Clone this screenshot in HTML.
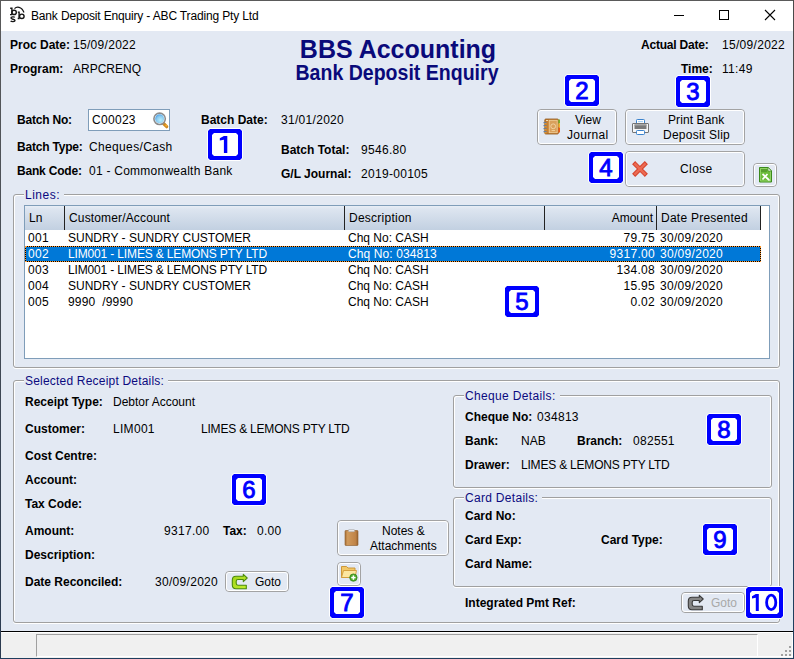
<!DOCTYPE html>
<html><head><meta charset="utf-8">
<style>
*{box-sizing:border-box}
html,body{margin:0;padding:0}
body{width:794px;height:659px;overflow:hidden;position:relative;background:#e3e9f3;font-family:"Liberation Sans",sans-serif;font-size:12px;line-height:14px;color:#000}
.a{position:absolute}
.t{position:absolute;white-space:pre;font-size:12px;line-height:14px}
.b{font-weight:bold}
.gl{position:absolute;border:1px solid #a0a0a0;border-radius:3px;box-shadow:inset 1px 1px 0 #fff,inset -1px 0 0 #fff,0 1px 0 #fff}
.gw{position:absolute;border:1px solid #fff;border-radius:3px}
.lab{position:absolute;white-space:pre;background:#e3e9f3;color:#0c0a80;padding:0 4px 0 1px;line-height:14px}
.btn{position:absolute;border:1px solid #a3a3a3;border-radius:4px;background:#e3e9f3}
.btn::after{content:"";position:absolute;left:0;top:0;right:0;bottom:0;border:1px solid #fff;border-radius:3px}
.nb{position:absolute;width:34px;height:31px}
.nb svg{position:absolute;left:0;top:0}
.nd{position:absolute;left:0;top:0;width:100%;height:100%;text-align:center;font:normal 24px/31px "Liberation Sans",sans-serif;color:#0000ff;-webkit-text-stroke:0.9px #0000ff}
</style></head><body>
<!-- window frame -->
<div class="a" style="left:0;top:0;width:794px;height:31px;background:#fff"></div>
<div class="a" style="left:0;top:631px;width:794px;height:1px;background:#000"></div>
<div class="a" style="left:0;top:632px;width:794px;height:27px;background:#f0f0f0"></div>
<div class="a" style="left:0;top:632px;width:794px;height:1px;background:#fff"></div>
<!-- status bar panels -->
<div class="a" style="left:36px;top:634px;width:722px;height:23px;border-left:1px solid #a0a0a0;border-top:1px solid #a0a0a0;border-right:1px solid #fff;border-bottom:1px solid #fff"></div>
<div class="a" style="left:758px;top:634px;width:35px;height:23px;border-right:1px solid #fff;border-bottom:1px solid #fff"></div>
<svg class="a" style="left:776px;top:640px" width="16" height="16"><g fill="#a0a0a0"><rect x="13" y="6" width="2" height="2"/><rect x="9" y="10" width="2" height="2"/><rect x="13" y="10" width="2" height="2"/><rect x="5" y="14" width="2" height="2"/><rect x="9" y="14" width="2" height="2"/><rect x="13" y="14" width="2" height="2"/></g></svg>
<!-- borders -->
<div class="a" style="left:0;top:0;width:1px;height:659px;background:linear-gradient(#5a5a5a,#2a3a50)"></div>
<div class="a" style="left:0;top:0;width:794px;height:1px;background:#5a5a5a"></div>
<div class="a" style="left:793px;top:0;width:1px;height:659px;background:linear-gradient(#4a4a4a 0,#4a4a4a 45%,#1f3e5e 55%,#1f3e5e 100%)"></div>
<div class="a" style="left:0;top:658px;width:794px;height:1px;background:#1f3e5e"></div>

<!-- title bar -->
<svg class="a" style="left:6px;top:4px" width="24" height="22" viewBox="0 0 24 22">
<g fill="none" stroke="#151515" stroke-width="1.4">
<path d="M4.2 4.2H5.9V10.6M4 10.6H6.2"/>
<ellipse cx="8.1" cy="8.4" rx="2.2" ry="2.1"/>
<path d="M13.1 7.6V14.6M11.8 8.1H13.1M11.7 14.5H13.6"/>
<ellipse cx="15.8" cy="12.3" rx="2.3" ry="2.2"/>
<path d="M8.8 13.4C8.2 12.6 5 12.6 5 14 C5 15.4 9 15 9 16.5 C9 18 5.5 17.8 4.6 17"/>
<path d="M8.5 4.6C10.5 2.5 15.5 2 18 8.5" stroke-width="1.2"/>
</g></svg>
<div class="t" style="left:31px;top:9px;letter-spacing:-0.16px">Bank Deposit Enquiry - ABC Trading Pty Ltd</div>
<div class="a" style="left:674px;top:15px;width:10px;height:1px;background:#000"></div>
<div class="a" style="left:719px;top:10px;width:10px;height:10px;border:1px solid #000"></div>
<svg class="a" style="left:764px;top:9px" width="12" height="12"><path d="M1 1L11 11M11 1L1 11" stroke="#000" stroke-width="1.1"/></svg>

<!-- header -->
<div class="t b" style="left:10px;top:38px">Proc Date:</div>
<div class="t" style="left:73px;top:38px;letter-spacing:0.3px">15/09/2022</div>
<div class="t b" style="left:10px;top:62px">Program:</div>
<div class="t" style="left:73px;top:62px">ARPCRENQ</div>
<div class="t b" style="left:1px;width:794px;text-align:center;top:34px;font-size:25px;line-height:30px;color:#0a0a7a">BBS Accounting</div>
<div class="t b" style="left:0;width:794px;text-align:center;top:61px;font-size:22px;line-height:24px;color:#0a0a7a;transform:scaleX(0.888);transform-origin:397px 0">Bank Deposit Enquiry</div>
<div class="t b" style="left:641px;top:38px;letter-spacing:-0.2px">Actual Date:</div>
<div class="t" style="left:722px;top:38px;letter-spacing:0.3px">15/09/2022</div>
<div class="t b" style="left:681px;top:62px">Time:</div>
<div class="t" style="left:722px;top:62px;letter-spacing:0.3px">11:49</div>

<!-- batch -->
<div class="t b" style="left:17px;top:113px;letter-spacing:-0.2px">Batch No:</div>
<div class="a" style="left:88px;top:109px;width:82px;height:22px;background:#fff;border:1px solid #7f9db9"></div>
<div class="t" style="left:92px;top:113px;letter-spacing:0.3px">C00023</div>
<svg class="a" style="left:148px;top:108px" width="24" height="24" viewBox="0 0 24 24">
<defs><radialGradient id="mg" cx="0.6" cy="0.65" r="0.7"><stop offset="0" stop-color="#b8eefa"/><stop offset="0.6" stop-color="#8ccbf0"/><stop offset="1" stop-color="#4a9fe4"/></radialGradient></defs>
<path d="M15.5 15.5l3.2 3.2" stroke="#d08a20" stroke-width="3.2" stroke-linecap="round"/>
<circle cx="18.2" cy="17.6" r="1" fill="#f6b030"/>
<circle cx="11.6" cy="10.8" r="5.7" fill="#fff" stroke="#8c8c8c" stroke-width="1.6"/>
<circle cx="11.6" cy="10.8" r="4.5" fill="url(#mg)"/>
</svg>
<div class="t b" style="left:201px;top:113px">Batch Date:</div>
<div class="t" style="left:281px;top:113px;letter-spacing:0.3px">31/01/2020</div>
<div class="t b" style="left:17px;top:140px;letter-spacing:-0.2px">Batch Type:</div>
<div class="t" style="left:89px;top:140px;letter-spacing:0.35px">Cheques/Cash</div>
<div class="t b" style="left:17px;top:164px;letter-spacing:-0.2px">Bank Code:</div>
<div class="t" style="left:89px;top:164px;letter-spacing:0.25px">01 - Commonwealth Bank</div>
<div class="t b" style="left:281px;top:143px">Batch Total:</div>
<div class="t" style="left:361px;top:143px;letter-spacing:0.3px">9546.80</div>
<div class="t b" style="left:281px;top:167px">G/L Journal:</div>
<div class="t" style="left:361px;top:167px;letter-spacing:0.3px">2019-00105</div>

<!-- buttons -->
<div class="btn" style="left:537px;top:109px;width:80px;height:36px"></div>
<svg class="a" style="left:543px;top:118px" width="18" height="17" viewBox="0 0 18 17">
<rect x="1.8" y="1" width="13.6" height="15" rx="1" fill="#c57f33" stroke="#8e5418" stroke-width="0.8"/>
<rect x="6.2" y="2.3" width="8" height="12.4" fill="#d9a05c" stroke="#f3d29e" stroke-width="0.8"/>
<circle cx="10.2" cy="8.3" r="2.4" fill="none" stroke="#f6dcae" stroke-width="0.8"/>
<rect x="8.6" y="12" width="3.4" height="0.9" fill="#f3d29e"/>
<rect x="3" y="2" width="2" height="1" fill="#f6dcae"/>
<g><rect x="0.5" y="4" width="3" height="1.3" fill="#6a7e98"/><rect x="1.5" y="5.3" width="2" height="1" fill="#f0a030"/>
<rect x="0.5" y="7" width="3" height="1.3" fill="#6a7e98"/><rect x="1.5" y="8.3" width="2" height="1" fill="#f0a030"/>
<rect x="0.5" y="10" width="3" height="1.3" fill="#6a7e98"/><rect x="1.5" y="11.3" width="2" height="1" fill="#f0a030"/>
<rect x="0.5" y="13" width="3" height="1.3" fill="#6a7e98"/><rect x="1.5" y="14.3" width="2" height="1" fill="#f0a030"/></g>
<rect x="15.4" y="1.5" width="1.6" height="4" fill="#78b028"/><rect x="15.4" y="5.5" width="1.6" height="4" fill="#f4b428"/><rect x="15.4" y="9.5" width="1.6" height="5" fill="#ec5a10"/>
</svg>
<div class="t" style="left:575px;top:113px">View</div>
<div class="t" style="left:567px;top:128px;letter-spacing:0.3px">Journal</div>

<div class="btn" style="left:625px;top:109px;width:120px;height:36px"></div>
<svg class="a" style="left:632px;top:118px" width="17" height="17" viewBox="0 0 17 17">
<rect x="4.5" y="1.5" width="8" height="6" rx="0.8" fill="#fff" stroke="#3b82cc" stroke-width="1"/>
<rect x="6" y="3" width="5" height="1.2" fill="#a8d0f4"/>
<rect x="0.5" y="5.5" width="16" height="9" rx="0.5" fill="#f6f6f6" stroke="#757575" stroke-width="1"/>
<rect x="2.5" y="6.5" width="12" height="4.5" fill="#7a7a7a"/>
<rect x="2.5" y="6.5" width="12" height="1.2" fill="#9a9a9a"/>
<rect x="4.5" y="12.5" width="8" height="4" rx="0.8" fill="#fff" stroke="#3b82cc" stroke-width="1"/>
</svg>
<div class="t" style="left:668px;top:113px;letter-spacing:0.1px">Print Bank</div>
<div class="t" style="left:663px;top:128px;letter-spacing:0.25px">Deposit Slip</div>

<div class="btn" style="left:625px;top:151px;width:120px;height:36px"></div>
<svg class="a" style="left:632px;top:160.5px" width="16" height="16" viewBox="0 0 16 16">
<path d="M3.2 3.2L12.8 12.8M12.8 3.2L3.2 12.8" stroke="#d5432c" stroke-width="4.4" stroke-linecap="square"/>
<path d="M3.2 3.2L12.8 12.8M12.8 3.2L3.2 12.8" stroke="#ec6a52" stroke-width="2.4" stroke-linecap="square"/>
</svg>
<div class="t" style="left:680px;top:162px;letter-spacing:0.4px">Close</div>

<div class="btn" style="left:753px;top:163px;width:24px;height:24px"></div>
<svg class="a" style="left:758px;top:166px" width="15" height="17" viewBox="0 0 15 17">
<path d="M1.5 1.5H10.2L13.5 4.8V16H1.5Z" fill="#6cbc3c" stroke="#3c8a1c" stroke-width="1"/>
<path d="M2.5 2.5H9.8L12.5 5.2V15H2.5Z" fill="none" stroke="#9ad870" stroke-width="0.8"/>
<rect x="3" y="3" width="6" height="3" fill="#58a030"/>
<path d="M10 1.5V5H13.5Z" fill="#fff" stroke="#3c8a1c" stroke-width="0.7"/>
<path d="M4.5 8L10.5 13.5M9.5 8L4.5 13.5M10.5 13.5l1 1" stroke="#fff" stroke-width="1.7"/>
</svg>

<!-- Lines group -->
<div class="gl" style="left:13px;top:194px;width:767px;height:174px"></div>
<div class="lab" style="left:24px;top:188px;letter-spacing:0.5px">Lines:</div>

<div class="a" style="left:24px;top:205px;width:746px;height:154px;background:#fff;border:1px solid #7f9db9"></div>
<div class="a" style="left:25px;top:206px;width:735px;height:24px;background:linear-gradient(#e8eef6 0,#dde5f0 12%,#c2d0e1 100%)"></div>
<div class="a" style="left:64px;top:206px;width:1px;height:24px;background:#222"></div>
<div class="a" style="left:344px;top:206px;width:1px;height:24px;background:#222"></div>
<div class="a" style="left:544px;top:206px;width:1px;height:24px;background:#222"></div>
<div class="a" style="left:656px;top:206px;width:1px;height:24px;background:#222"></div>
<div class="a" style="left:760px;top:206px;width:1px;height:24px;background:#222"></div>
<div class="t" style="left:29px;top:211px">Ln</div>
<div class="t" style="left:69px;top:211px;letter-spacing:0.15px">Customer/Account</div>
<div class="t" style="left:349px;top:211px;letter-spacing:0.25px">Description</div>
<div class="t" style="left:545px;top:211px;width:108px;text-align:right">Amount</div>
<div class="t" style="left:661px;top:211px;letter-spacing:0.25px">Date Presented</div>

<div class="a" style="left:25px;top:246px;width:736px;height:16px;background:#000"><div class="a" style="left:0;top:0;width:736px;height:16px;border:1px dotted #ff9a30"></div><div class="a" style="left:1px;top:1px;width:734px;height:14px;background:#0078d7"></div></div>

<div class="t" style="left:28px;top:231px;letter-spacing:0.3px">001</div>
<div class="t" style="left:68px;top:231px">SUNDRY - SUNDRY CUSTOMER</div>
<div class="t" style="left:348px;top:231px">Chq No: CASH</div>
<div class="t" style="left:545px;top:231px;width:110px;text-align:right;letter-spacing:0.3px">79.75</div>
<div class="t" style="left:660px;top:231px;letter-spacing:0.3px">30/09/2020</div>

<div class="t" style="left:28px;top:247px;color:#fff;letter-spacing:0.3px">002</div>
<div class="t" style="left:68px;top:247px;color:#fff;letter-spacing:-0.15px">LIM001 - LIMES &amp; LEMONS PTY LTD</div>
<div class="t" style="left:348px;top:247px;color:#fff;letter-spacing:0.1px">Chq No: 034813</div>
<div class="t" style="left:545px;top:247px;width:110px;text-align:right;color:#fff;letter-spacing:0.3px">9317.00</div>
<div class="t" style="left:660px;top:247px;color:#fff;letter-spacing:0.3px">30/09/2020</div>

<div class="t" style="left:28px;top:263px;letter-spacing:0.3px">003</div>
<div class="t" style="left:68px;top:263px;letter-spacing:-0.15px">LIM001 - LIMES &amp; LEMONS PTY LTD</div>
<div class="t" style="left:348px;top:263px">Chq No: CASH</div>
<div class="t" style="left:545px;top:263px;width:110px;text-align:right;letter-spacing:0.3px">134.08</div>
<div class="t" style="left:660px;top:263px;letter-spacing:0.3px">30/09/2020</div>

<div class="t" style="left:28px;top:279px;letter-spacing:0.3px">004</div>
<div class="t" style="left:68px;top:279px">SUNDRY - SUNDRY CUSTOMER</div>
<div class="t" style="left:348px;top:279px">Chq No: CASH</div>
<div class="t" style="left:545px;top:279px;width:110px;text-align:right;letter-spacing:0.3px">15.95</div>
<div class="t" style="left:660px;top:279px;letter-spacing:0.3px">30/09/2020</div>

<div class="t" style="left:28px;top:295px;letter-spacing:0.3px">005</div>
<div class="t" style="left:68px;top:295px;letter-spacing:0.15px">9990  /9990</div>
<div class="t" style="left:348px;top:295px">Chq No: CASH</div>
<div class="t" style="left:545px;top:295px;width:110px;text-align:right;letter-spacing:0.3px">0.02</div>
<div class="t" style="left:660px;top:295px;letter-spacing:0.3px">30/09/2020</div>

<!-- Selected receipt group -->
<div class="gl" style="left:13px;top:380px;width:767px;height:243px"></div>
<div class="lab" style="left:24px;top:374px;letter-spacing:0.2px">Selected Receipt Details:</div>

<div class="t b" style="left:25px;top:395px">Receipt Type:</div>
<div class="t" style="left:113px;top:395px">Debtor Account</div>
<div class="t b" style="left:25px;top:422px">Customer:</div>
<div class="t" style="left:113px;top:422px;letter-spacing:0.3px">LIM001</div>
<div class="t" style="left:201px;top:422px;letter-spacing:-0.2px">LIMES &amp; LEMONS PTY LTD</div>
<div class="t b" style="left:25px;top:449px">Cost Centre:</div>
<div class="t b" style="left:25px;top:473px">Account:</div>
<div class="t b" style="left:25px;top:497px">Tax Code:</div>
<div class="t b" style="left:25px;top:524px">Amount:</div>
<div class="t" style="left:164px;top:524px;letter-spacing:0.3px">9317.00</div>
<div class="t b" style="left:223px;top:524px">Tax:</div>
<div class="t" style="left:257px;top:524px;letter-spacing:0.3px">0.00</div>
<div class="t b" style="left:25px;top:548px">Description:</div>
<div class="t b" style="left:25px;top:575px">Date Reconciled:</div>
<div class="t" style="left:155px;top:575px;letter-spacing:0.3px">30/09/2020</div>

<div class="btn" style="left:225px;top:571px;width:64px;height:21px"></div>
<svg class="a" style="left:228px;top:571px" width="24" height="21" viewBox="0 0 24 21">
<defs><linearGradient id="gg" x1="0" y1="0" x2="1" y2="1"><stop offset="0" stop-color="#9ed21a"/><stop offset="1" stop-color="#c4f030"/></linearGradient></defs>
<path d="M15.3 5.3V3.4L19.2 7L15.3 10.6V8.5H10Q8.2 8.5 8.2 10.3V12.3Q8.2 14.2 10 14.2H18.3V17.7H8Q4.3 17.7 4.3 14V9Q4.3 5.3 8 5.3Z" fill="url(#gg)" stroke="#4a8a0a" stroke-width="1.1" stroke-linejoin="round"/>
</svg>
<div class="t" style="left:255px;top:575px">Goto</div>

<div class="btn" style="left:337px;top:520px;width:112px;height:36px"></div>
<svg class="a" style="left:344px;top:529px" width="15" height="17" viewBox="0 0 15 17">
<defs><linearGradient id="cb" x1="0" y1="0" x2="1" y2="0"><stop offset="0" stop-color="#a87038"/><stop offset="0.2" stop-color="#d09a5c"/><stop offset="0.8" stop-color="#c08448"/><stop offset="1" stop-color="#9a6430"/></linearGradient></defs>
<rect x="1" y="1.5" width="13" height="15" rx="0.8" fill="url(#cb)" stroke="#8c5a28" stroke-width="0.6"/>
<rect x="4.5" y="0.5" width="6" height="2.2" rx="0.5" fill="#e8e8e8" stroke="#a0a0a0" stroke-width="0.5"/>
</svg>
<div class="t" style="left:382px;top:524px">Notes &amp;</div>
<div class="t" style="left:370px;top:539px">Attachments</div>

<div class="btn" style="left:337px;top:562px;width:24px;height:24px"></div>
<svg class="a" style="left:340px;top:564px" width="18" height="18" viewBox="0 0 18 18">
<path d="M1.5 2.5H6.5L8 4H15V13.5H1.5Z" fill="#f2c868" stroke="#c8902c" stroke-width="0.9"/>
<path d="M3.5 6.5H16.5L15 13.5H1.5Z" fill="#fce6a0" stroke="#d09a38" stroke-width="0.9"/>
<circle cx="13.4" cy="13.6" r="3.7" fill="#4caa28" stroke="#2e7c12" stroke-width="0.7"/>
<rect x="12.65" y="11.4" width="1.5" height="4.4" fill="#fff"/><rect x="11.2" y="12.85" width="4.4" height="1.5" fill="#fff"/>
</svg>

<!-- Cheque group -->
<div class="gl" style="left:453px;top:395px;width:319px;height:93px"></div>
<div class="lab" style="left:464px;top:389px;letter-spacing:0.35px">Cheque Details:</div>
<div class="t b" style="left:465px;top:410px">Cheque No:</div>
<div class="t" style="left:537px;top:410px;letter-spacing:0.3px">034813</div>
<div class="t b" style="left:465px;top:434px">Bank:</div>
<div class="t" style="left:521px;top:434px">NAB</div>
<div class="t b" style="left:577px;top:434px">Branch:</div>
<div class="t" style="left:633px;top:434px;letter-spacing:0.3px">082551</div>
<div class="t b" style="left:465px;top:458px">Drawer:</div>
<div class="t" style="left:521px;top:458px;letter-spacing:-0.2px">LIMES &amp; LEMONS PTY LTD</div>

<!-- Card group -->
<div class="gl" style="left:453px;top:497px;width:319px;height:90px"></div>
<div class="lab" style="left:464px;top:491px;letter-spacing:0.3px">Card Details:</div>
<div class="t b" style="left:465px;top:509px">Card No:</div>
<div class="t b" style="left:465px;top:533px">Card Exp:</div>
<div class="t b" style="left:601px;top:533px">Card Type:</div>
<div class="t b" style="left:465px;top:557px">Card Name:</div>
<div class="t b" style="left:465px;top:596px">Integrated Pmt Ref:</div>

<div class="btn" style="left:681px;top:592px;width:64px;height:21px"></div>
<svg class="a" style="left:684px;top:592px" width="24" height="21" viewBox="0 0 24 21">
<path d="M15.3 5.3V3.4L19.2 7L15.3 10.6V8.5H10Q8.2 8.5 8.2 10.3V12.3Q8.2 14.2 10 14.2H18.3V17.7H8Q4.3 17.7 4.3 14V9Q4.3 5.3 8 5.3Z" fill="#858585" stroke="#383838" stroke-width="1.1" stroke-linejoin="round"/>
</svg>
<div class="t" style="left:711px;top:596px;color:#a8a8a8">Goto</div>

<!-- numbered markers -->
<div class="nb" style="left:208px;top:129px"><svg width="36" height="33" style="left:-1px;top:-1px"><path d="M3 0H33L36 3V30L33 33H3L0 30V3Z" fill="#fff"/><path d="M3 1H33L35 3V30L33 32H3L1 30V3Z" fill="#0000ff"/><path d="M7 5H29L31 7V26L29 28H7L5 26V7Z" fill="#fff"/><path d="M11.8 9.2L15.9 7H19.3V24H15.9V10.8L11.8 11.6Z" fill="#0000ff" transform="translate(1,1)"/></svg></div>
<div class="nb" style="left:565px;top:75px"><svg width="36" height="33" style="left:-1px;top:-1px"><path d="M3 0H33L36 3V30L33 33H3L0 30V3Z" fill="#fff"/><path d="M3 1H33L35 3V30L33 32H3L1 30V3Z" fill="#0000ff"/><path d="M7 5H29L31 7V26L29 28H7L5 26V7Z" fill="#fff"/></svg><div class="nd">2</div></div>
<div class="nb" style="left:676px;top:76px"><svg width="36" height="33" style="left:-1px;top:-1px"><path d="M3 0H33L36 3V30L33 33H3L0 30V3Z" fill="#fff"/><path d="M3 1H33L35 3V30L33 32H3L1 30V3Z" fill="#0000ff"/><path d="M7 5H29L31 7V26L29 28H7L5 26V7Z" fill="#fff"/></svg><div class="nd">3</div></div>
<div class="nb" style="left:589px;top:152px"><svg width="36" height="33" style="left:-1px;top:-1px"><path d="M3 0H33L36 3V30L33 33H3L0 30V3Z" fill="#fff"/><path d="M3 1H33L35 3V30L33 32H3L1 30V3Z" fill="#0000ff"/><path d="M7 5H29L31 7V26L29 28H7L5 26V7Z" fill="#fff"/></svg><div class="nd">4</div></div>
<div class="nb" style="left:505px;top:286px"><svg width="36" height="33" style="left:-1px;top:-1px"><path d="M3 0H33L36 3V30L33 33H3L0 30V3Z" fill="#fff"/><path d="M3 1H33L35 3V30L33 32H3L1 30V3Z" fill="#0000ff"/><path d="M7 5H29L31 7V26L29 28H7L5 26V7Z" fill="#fff"/></svg><div class="nd">5</div></div>
<div class="nb" style="left:232px;top:474px"><svg width="36" height="33" style="left:-1px;top:-1px"><path d="M3 0H33L36 3V30L33 33H3L0 30V3Z" fill="#fff"/><path d="M3 1H33L35 3V30L33 32H3L1 30V3Z" fill="#0000ff"/><path d="M7 5H29L31 7V26L29 28H7L5 26V7Z" fill="#fff"/></svg><div class="nd">6</div></div>
<div class="nb" style="left:330px;top:587px"><svg width="36" height="33" style="left:-1px;top:-1px"><path d="M3 0H33L36 3V30L33 33H3L0 30V3Z" fill="#fff"/><path d="M3 1H33L35 3V30L33 32H3L1 30V3Z" fill="#0000ff"/><path d="M7 5H29L31 7V26L29 28H7L5 26V7Z" fill="#fff"/></svg><div class="nd">7</div></div>
<div class="nb" style="left:707px;top:414px"><svg width="36" height="33" style="left:-1px;top:-1px"><path d="M3 0H33L36 3V30L33 33H3L0 30V3Z" fill="#fff"/><path d="M3 1H33L35 3V30L33 32H3L1 30V3Z" fill="#0000ff"/><path d="M7 5H29L31 7V26L29 28H7L5 26V7Z" fill="#fff"/></svg><div class="nd">8</div></div>
<div class="nb" style="left:703px;top:524px"><svg width="36" height="33" style="left:-1px;top:-1px"><path d="M3 0H33L36 3V30L33 33H3L0 30V3Z" fill="#fff"/><path d="M3 1H33L35 3V30L33 32H3L1 30V3Z" fill="#0000ff"/><path d="M7 5H29L31 7V26L29 28H7L5 26V7Z" fill="#fff"/></svg><div class="nd">9</div></div>
<div class="nb" style="left:746px;top:587px;width:37px"><svg width="39" height="33" style="left:-1px;top:-1px"><path d="M3 0H36L39 3V30L36 33H3L0 30V3Z" fill="#fff"/><path d="M3 1H36L38 3V30L36 32H3L1 30V3Z" fill="#0000ff"/><path d="M7 5H32L34 7V26L32 28H7L5 26V7Z" fill="#fff"/><g transform="translate(1,1)"><path d="M6 9.2L9.8 7H12.8V24H9.8V10.8L6 11.6Z" fill="#0000ff"/><ellipse cx="25.2" cy="15.4" rx="4.6" ry="7.3" fill="none" stroke="#0000ff" stroke-width="2.8"/></g></svg></div>
</body></html>
